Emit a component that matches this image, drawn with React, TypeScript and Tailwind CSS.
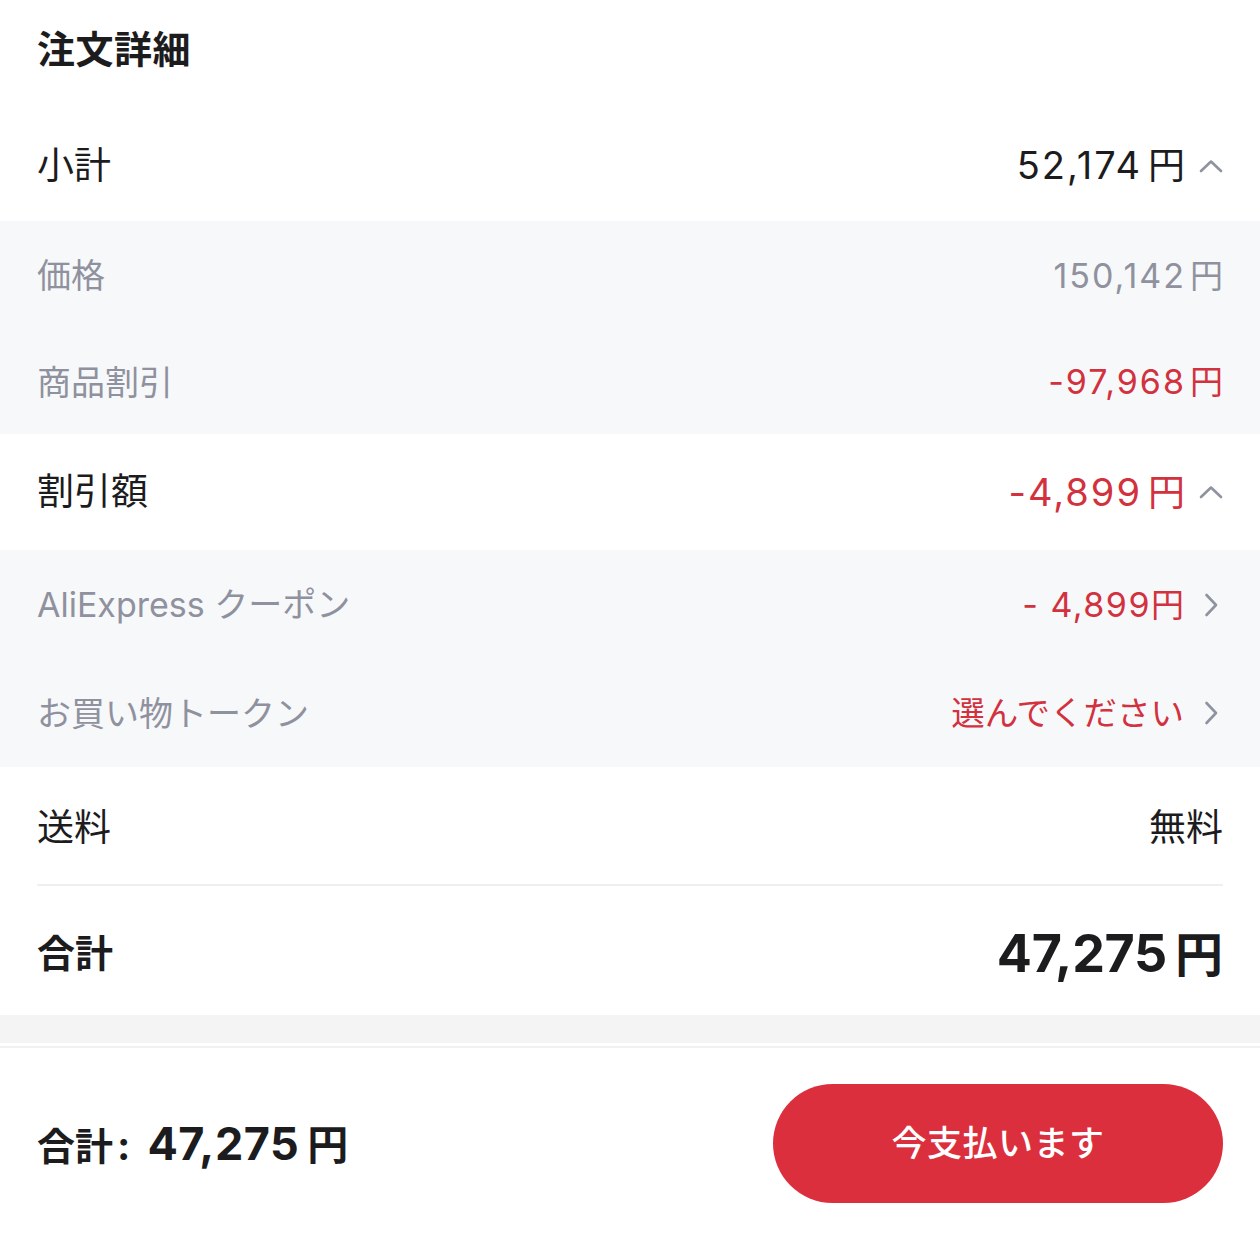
import React from "react";

const FONT = { fontFamily: 'Inter, "Noto Sans CJK JP", sans-serif' };

function ChevronUp() {
  return (
    <svg width="24" height="14" viewBox="0 0 24 14" fill="none" className="shrink-0">
      <path d="M2 12L12 2.5L22 12" stroke="#8f939f" strokeWidth="2.6" strokeLinecap="round" strokeLinejoin="round" />
    </svg>
  );
}

function ChevronRight() {
  return (
    <svg width="14" height="24" viewBox="0 0 14 24" fill="none" className="shrink-0">
      <path d="M2.5 2L12 12L2.5 22" stroke="#8f939f" strokeWidth="2.6" strokeLinecap="round" strokeLinejoin="round" />
    </svg>
  );
}

export default function App() {
  return (
    <div className="w-[1260px] h-[1260px] bg-white overflow-hidden flex flex-col" style={FONT}>
      <div className="h-[110px] px-[37px] flex items-center pb-[12px]">
        <h1 className="text-[38px] font-bold text-[#1c1c1e] tracking-[0.5px]">注文詳細</h1>
      </div>

      <div className="h-[111px] px-[37px] flex items-center justify-between">
        <span className="text-[37px] text-[#1c1c1e]">小計</span>
        <div className="flex items-center gap-[14px]">
          <span className="text-[#1c1c1e] flex items-baseline">
            <span className="text-[38px] tracking-[2px]">52,174</span>
            <span className="text-[37px] ml-[6px]">円</span>
          </span>
          <ChevronUp />
        </div>
      </div>

      <div className="bg-[#f7f8fa] flex flex-col">
        <div className="h-[109px] px-[37px] flex items-center justify-between">
          <span className="text-[34px] text-[#8f929e]">価格</span>
          <span className="text-[#8f929e] flex items-baseline">
            <span className="text-[34px] tracking-[2px]">150,142</span>
            <span className="text-[33px] ml-[4px]">円</span>
          </span>
        </div>
        <div className="h-[104px] px-[37px] flex items-center justify-between">
          <span className="text-[34px] text-[#8f929e]">商品割引</span>
          <span className="text-[#d2313e] flex items-baseline">
            <span className="text-[34px] tracking-[2px]">-97,968</span>
            <span className="text-[33px] ml-[4px]">円</span>
          </span>
        </div>
      </div>

      <div className="h-[116px] px-[37px] flex items-center justify-between">
        <span className="text-[37px] text-[#1c1c1e]">割引額</span>
        <div className="flex items-center gap-[14px]">
          <span className="text-[#d2313e] flex items-baseline">
            <span className="text-[38px] tracking-[2px]">-4,899</span>
            <span className="text-[37px] ml-[6px]">円</span>
          </span>
          <ChevronUp />
        </div>
      </div>

      <div className="bg-[#f7f8fa] flex flex-col">
        <div className="h-[109px] px-[37px] flex items-center justify-between">
          <span className="text-[34px] text-[#8f929e]">AliExpress クーポン</span>
          <div className="flex items-center gap-[20px] pr-[5px]">
            <span className="text-[#d2313e] flex items-baseline">
              <span className="text-[34px] tracking-[1.5px] whitespace-pre">- 4,899</span>
              <span className="text-[33px]">円</span>
            </span>
            <ChevronRight />
          </div>
        </div>
        <div className="h-[108px] px-[37px] flex items-center justify-between">
          <span className="text-[34px] text-[#8f929e]">お買い物トークン</span>
          <div className="flex items-center gap-[20px] pr-[5px]">
            <span className="text-[33.5px] text-[#d2313e]">選んでください</span>
            <ChevronRight />
          </div>
        </div>
      </div>

      <div className="mx-[37px] h-[119px] pt-[4px] flex items-center justify-between border-b-2 border-[#efefef]">
        <span className="text-[37px] text-[#1c1c1e]">送料</span>
        <span className="text-[37px] text-[#1c1c1e]">無料</span>
      </div>

      <div className="h-[129px] pt-[6px] px-[37px] flex items-center justify-between">
        <span className="text-[38px] font-bold text-[#1c1c1e]">合計</span>
        <span className="text-[#1c1c1e] font-bold flex items-baseline">
          <span className="text-[52px] tracking-[-0.3px]">47,275</span>
          <span className="text-[48px] ml-[8px]">円</span>
        </span>
      </div>

      <div className="h-[28px] bg-[#f4f4f4]" />
      <div className="h-[5px] bg-white border-b-2 border-[#f1f1f1]" />

      <div className="flex-1 px-[37px] flex items-start justify-between pt-[36px]">
        <div className="h-[119px] flex items-center">
          <span className="text-[#1c1c1e] font-bold flex items-baseline">
            <span className="text-[38px]">合計</span>
            <span className="text-[40px] ml-[4px]">:</span>
            <span className="text-[45px] ml-[17px] tracking-[0.5px]">47,275</span>
            <span className="text-[41px] ml-[8px]">円</span>
          </span>
        </div>
        <button className="w-[450px] h-[119px] rounded-full bg-[#dc2f3d] text-white text-[35px] font-medium flex items-center justify-center tracking-[0.5px]">
          今支払います
        </button>
      </div>
    </div>
  );
}
